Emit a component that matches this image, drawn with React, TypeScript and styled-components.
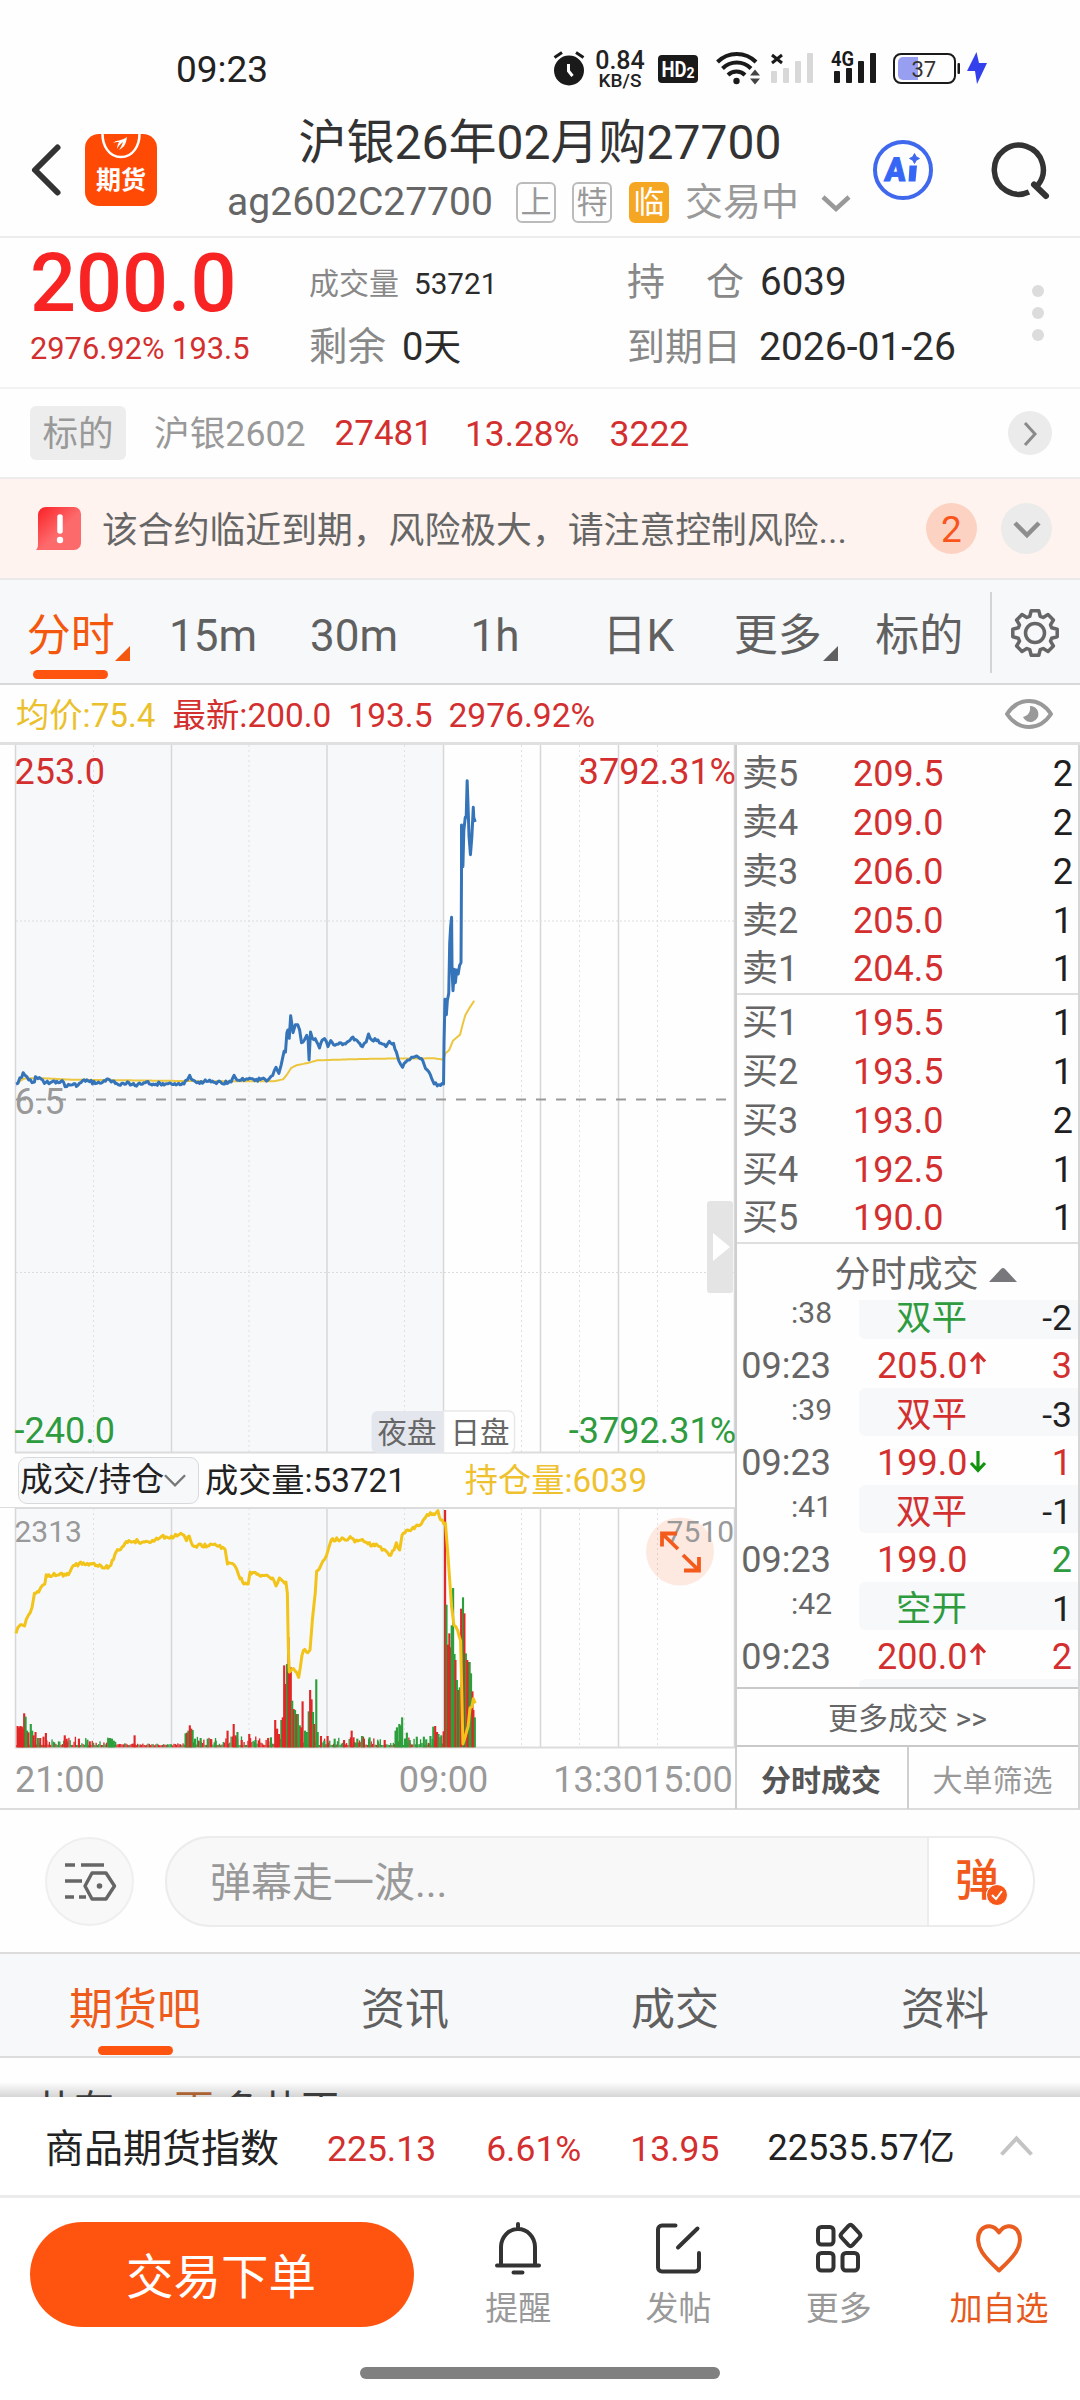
import React from "react";
import styled, { createGlobalStyle, css } from "styled-components";

const RED = "#d32f2f";
const GREEN = "#2e9b3f";
const ORANGE = "#ff540f";
const LINE = "#dcdcdc";

const GlobalStyle = createGlobalStyle`
  *, *::before, *::after { box-sizing: border-box; }
  body {
    margin: 0;
    background: #fefefe;
    color: #222;
    font-family: Roboto, "Noto Sans CJK SC", sans-serif;
  }
  svg { display: block; flex: none; overflow: visible; }
  svg text { font-family: Roboto, "Noto Sans CJK SC", sans-serif; }
`;

const Screen = styled.main`
  width: 1080px;
  height: 2400px;
  display: flex;
  flex-direction: column;
  overflow: hidden;
  white-space: nowrap;
`;

const Text = styled.span<{ $size: number; $color?: string; $weight?: number; $ml?: number; $drop?: number }>`
  font-size: ${(p) => p.$size}px;
  line-height: 1.15;
  color: ${(p) => p.$color ?? "#222"};
  font-weight: ${(p) => p.$weight ?? 400};
  margin-left: ${(p) => p.$ml ?? 0}px;
  padding-top: ${(p) => p.$drop ?? 0}px;
`;

/* ---------- status bar ---------- */

const StatusBar = styled.header`
  height: 100px;
  flex: none;
  display: flex;
  align-items: center;
  padding: 36px 93px 0 176px;
`;

const Clock = styled.span`
  font-size: 37px;
  line-height: 40px;
  margin-top: 4px;
  margin-right: auto;
`;

const StatusIcons = styled.div`
  display: flex;
  align-items: center;
`;

const Speed = styled.div`
  width: 52px;
  margin: 4px 12px 0 9px;
  display: flex;
  flex-direction: column;
  align-items: center;
  font-weight: 500;
  font-size: 25px;
  line-height: 20px;
  small {
    font-size: 19px;
    line-height: 19px;
  }
`;

const StatusGlyph = styled.svg<{ $ml?: number }>`
  margin-left: ${(p) => p.$ml ?? 0}px;
`;

function Status() {
  return (
    <StatusBar>
      <Clock>09:23</Clock>
      <StatusIcons>
        <StatusGlyph width="32" height="34" viewBox="0 0 32 34">
          <circle cx="16" cy="19.5" r="15" fill="#1a1a1a" />
          <path d="M1.5 6.5 9 1.5M30.5 6.5 23 1.5" stroke="#1a1a1a" strokeWidth="3" />
          <path d="M15.5 13v7l4 5" stroke="#fff" strokeWidth="3" fill="none" />
        </StatusGlyph>
        <Speed>
          0.84
          <small>KB/S</small>
        </Speed>
        <StatusGlyph width="40" height="34" viewBox="0 0 40 34">
          <rect y="4" width="40" height="28" rx="4" fill="#1a1a1a" />
          <text x="3.5" y="26" fontSize="22" fontWeight="700" fill="#fff" textLength="25" lengthAdjust="spacingAndGlyphs">HD</text>
          <text x="28.5" y="27" fontSize="14" fontWeight="700" fill="#fff">2</text>
        </StatusGlyph>
        <StatusGlyph $ml={18} width="44" height="34" viewBox="0 0 44 34" fill="none" stroke="#1a1a1a" strokeWidth="4">
          <path d="M1.5 11a27 27 0 0 1 38.500 0" />
          <path d="M6.500 17.500a20 20 0 0 1 28.500 0" />
          <path d="M12 24a12 12 0 0 1 17 0" />
          <circle cx="20.500" cy="30" r="3.200" fill="#1a1a1a" stroke="none" />
          <path d="M34 24.500l5-6 5 6zM34 27.500l5 6 5-6z" fill="#444" stroke="none" />
        </StatusGlyph>
        <StatusGlyph $ml={11} width="43" height="34" viewBox="0 0 43 34" fill="#d8d8d8">
          <path d="M1 4l10 8M11 4l-10 8" stroke="#1a1a1a" strokeWidth="3" />
          <rect y="20" width="6" height="12" rx="1" />
          <rect x="12" y="17" width="6" height="15" rx="1" />
          <rect x="24" y="10" width="6" height="22" rx="1" />
          <rect x="36" y="2" width="6" height="30" rx="1" />
        </StatusGlyph>
        <StatusGlyph $ml={17} width="46" height="34" viewBox="0 0 46 34" fill="#1a1a1a">
          <text x="0" y="15" fontSize="20" fontWeight="700" textLength="23" lengthAdjust="spacingAndGlyphs">4G</text>
          <rect x="3" y="20" width="6" height="12" rx="1" />
          <rect x="15" y="17" width="6" height="15" rx="1" />
          <rect x="27" y="10" width="6" height="22" rx="1" />
          <rect x="39" y="2" width="6" height="30" rx="1" />
        </StatusGlyph>
        <StatusGlyph $ml={16} width="67" height="34" viewBox="0 0 67 34">
          <rect x="1" y="3" width="61" height="29" rx="7" fill="none" stroke="#1a1a1a" strokeWidth="2" />
          <path d="M25 6v23H10a5 5 0 0 1-5-5V11a5 5 0 0 1 5-5z" fill="#989ff0" />
          <text x="18.500" y="25.500" fontSize="22" fill="#333">37</text>
          <rect x="64.500" y="12" width="2.500" height="11" rx="1" fill="#1a1a1a" />
        </StatusGlyph>
        <StatusGlyph $ml={7} width="20" height="34" viewBox="0 0 20 34">
          <path d="M9.500 1 0 20h8l2 13 10-21h-8z" fill="#3340ec" />
        </StatusGlyph>
      </StatusIcons>
    </StatusBar>
  );
}

/* ---------- title bar ---------- */

const TitleBar = styled.div`
  height: 138px;
  flex: none;
  display: grid;
  grid-template-columns: 220px 1fr 220px;
  border-bottom: 2px solid #ececec;
`;

const Side = styled.div<{ $gap: number; $left: number }>`
  display: flex;
  align-items: center;
  gap: ${(p) => p.$gap}px;
  padding: 4px 0 0 ${(p) => p.$left}px;
`;

const Logo = styled.div`
  width: 72px;
  height: 72px;
  border-radius: 14px;
  background: #ff4a06;
  display: flex;
  flex-direction: column;
  align-items: center;
  color: #fff;
  font-weight: 700;
  font-size: 25px;
  line-height: 44px;
`;

const TitleColumn = styled.div`
  display: flex;
  flex-direction: column;
  align-items: center;
  gap: 11px;
  padding-top: 14px;
`;

const Title = styled.h1`
  margin: 0;
  font-size: 48px;
  line-height: 57px;
  font-weight: 400;
  color: #333;
`;

const SubTitle = styled.div`
  display: flex;
  align-items: center;
  height: 41px;
  padding-right: 2px;
`;

const Badge = styled.span<{ $solid?: boolean; $ml: number }>`
  width: 40px;
  height: 41px;
  margin-left: ${(p) => p.$ml}px;
  border-radius: 6px;
  border: 2px solid ${(p) => (p.$solid ? "#f5a623" : "#bbb")};
  background: ${(p) => (p.$solid ? "#f5a623" : "transparent")};
  color: ${(p) => (p.$solid ? "#fff" : "#999")};
  font-size: 31px;
  line-height: 38px;
  text-align: center;
`;

function Header() {
  return (
    <TitleBar>
      <Side $gap={24} $left={31}>
        <svg width="30" height="52" viewBox="0 0 30 52">
          <path d="M26.500 3.500 4 26l22.500 22.500" fill="none" stroke="#333" strokeWidth="6" strokeLinecap="round" strokeLinejoin="round" />
        </svg>
        <Logo>
          <svg width="44" height="25" viewBox="0 0 44 25">
            <path d="M3.500 0c0 11 6 23 18.500 23S40.500 11 40.500 0" fill="none" stroke="#fff" strokeWidth="2.500" />
            <path d="M14 9c3-3 9-2 14-6-1 6-2 10-8 13 2-3 3-5 4-8-3 2-5 5-6 7 0-3 1-5 2-7-3 0-4 0-6 1z" fill="#fff" />
          </svg>
          期货
        </Logo>
      </Side>
      <TitleColumn>
        <Title>沪银26年02月购27700</Title>
        <SubTitle>
          <Text $size={39} $color="#666">ag2602C27700</Text>
          <Badge $ml={23}>上</Badge>
          <Badge $ml={16}>特</Badge>
          <Badge $ml={17} $solid>临</Badge>
          <Text $size={38} $color="#999" $ml={16}>交易中</Text>
          <StatusGlyph $ml={22} width="30" height="16" viewBox="0 0 30 16">
            <path d="M2 2l13 12L28 2" fill="none" stroke="#999" strokeWidth="4.500" />
          </StatusGlyph>
        </SubTitle>
      </TitleColumn>
      <Side $gap={59} $left={13}>
        <svg width="60" height="60" viewBox="0 0 60 60">
          <circle cx="30" cy="30" r="28" fill="none" stroke="#3f68ec" strokeWidth="4" />
          <text x="14.500" y="41" fontSize="33" fontWeight="900" fill="#3566f5" stroke="#3566f5" strokeWidth="1" textLength="21" lengthAdjust="spacingAndGlyphs" transform="skewX(-5)">A</text>
          <path d="M36.500 25.500h7.500L42.500 41.500h-7z" fill="#3566f5" />
          <path d="M41.500 13.500q1 4 5 5-4 1-5 5-1-4-5-5 4-1 5-5z" fill="#3f68ec" stroke="#3f68ec" />
        </svg>
        <svg width="58" height="58" viewBox="0 0 58 58" fill="none" stroke="#333">
          <path d="M37 51A24.500 24.500 0 1 1 45.800 44.200" strokeWidth="5.500" />
          <path d="M42 43.500 54 55" strokeWidth="6" strokeLinecap="round" />
        </svg>
      </Side>
    </TitleBar>
  );
}

/* ---------- quote summary ---------- */

const Quote = styled.section`
  height: 151px;
  flex: none;
  display: grid;
  grid-template-columns: 279px 318px 1fr 85px;
  padding-left: 30px;
  border-bottom: 2px solid #f2f2f2;
`;

const QuoteLead = styled.div`
  padding-top: 1px;
  color: #f82424;
  font-size: 81px;
  font-weight: 500;
  line-height: 90px;
  p {
    margin: 2px 0 0;
    color: ${RED};
    font-size: 30.8px;
    font-weight: 400;
    line-height: 36px;
  }
`;

const QuoteColumn = styled.dl<{ $top: number }>`
  margin: 0;
  padding-top: ${(p) => p.$top}px;
  div {
    display: flex;
    align-items: center;
    height: 46px;
    margin-bottom: ${(p) => 40 - p.$top}px;
  }
`;

const Term = styled.dt<{ $size: number; $width: number }>`
  display: flex;
  justify-content: space-between;
  width: ${(p) => p.$width}px;
  font-size: ${(p) => p.$size}px;
  line-height: 46px;
  color: #888;
`;

const Value = styled.dd<{ $size: number; $ml?: number }>`
  margin: 0 0 0 ${(p) => p.$ml ?? 0}px;
  font-size: ${(p) => p.$size}px;
  line-height: 46px;
  color: #2b2b2b;
`;

const Dots = styled.div`
  display: flex;
  flex-direction: column;
  gap: 10px;
  padding: 47px 0 0 37px;
  i {
    width: 12px;
    height: 12px;
    border-radius: 50%;
    background: #dcdcdc;
  }
`;

function QuotePanel() {
  return (
    <Quote>
      <QuoteLead>
        200.0
        <p>2976.92% 193.5</p>
      </QuoteLead>
      <QuoteColumn $top={23}>
        <div>
          <Term $size={30} $width={105}>成交量</Term>
          <Value $size={29.7}>53721</Value>
        </div>
        <div>
          <Term $size={38.5} $width={93}>剩余</Term>
          <Value $size={38}>0天</Value>
        </div>
      </QuoteColumn>
      <QuoteColumn $top={20.5}>
        <div>
          <Term $size={38} $width={117}><span>持</span><span>仓</span></Term>
          <Value $size={38.5} $ml={16}>6039</Value>
        </div>
        <div>
          <Term $size={38} $width={132}>到期日</Term>
          <Value $size={39}>2026-01-26</Value>
        </div>
      </QuoteColumn>
      <Dots><i /><i /><i /></Dots>
    </Quote>
  );
}

/* ---------- underlying + notice ---------- */

const Underlying = styled.section`
  height: 90px;
  flex: none;
  display: flex;
  align-items: center;
  padding: 0 28px 1px 30px;
  border-bottom: 2px solid #ececec;
`;

const Tag = styled.span`
  width: 96px;
  height: 54px;
  border-radius: 6px;
  background: #ededed;
  color: #999;
  font-size: 35.500px;
  line-height: 56px;
  text-align: center;
`;

const Round = styled.span<{ $size: number; $bg: string; $ml?: number }>`
  width: ${(p) => p.$size}px;
  height: ${(p) => p.$size}px;
  margin-left: ${(p) => p.$ml ?? 0}px;
  border-radius: 50%;
  background: ${(p) => p.$bg};
  color: #fa541c;
  font-size: 37px;
  padding-top: 2px;
  display: flex;
  align-items: center;
  justify-content: center;
`;

const Spacer = styled.span`
  flex: 1;
`;

const Notice = styled.section`
  height: 101px;
  flex: none;
  display: flex;
  align-items: center;
  padding: 0 28px 0 36px;
  background: #fef3ee;
  border-bottom: 2px solid #e9e9ea;
`;

function UnderlyingRow() {
  return (
    <Underlying>
      <Tag>标的</Tag>
      <Text $size={35.7} $color="#999" $ml={28} $drop={4}>沪银2602</Text>
      <Text $size={35} $color={RED} $ml={29} $drop={4}>27481</Text>
      <Text $size={35.3} $color={RED} $ml={32} $drop={4}>13.28%</Text>
      <Text $size={35.5} $color={RED} $ml={30} $drop={4}>3222</Text>
      <Spacer />
      <Round $size={44} $bg="#ebebeb">
        <svg width="14" height="24" viewBox="0 0 14 24">
          <path d="M2 1l10 11L2 23" fill="none" stroke="#8a8a8a" strokeWidth="3" />
        </svg>
      </Round>
    </Underlying>
  );
}

function NoticeRow() {
  return (
    <Notice>
      <svg width="46" height="43" viewBox="0 0 46 43">
        <defs>
          <linearGradient id="alert" x1="0" y1="0" x2="1" y2="1">
            <stop offset="0.100" stopColor="#fa2b2f" />
            <stop offset="0.550" stopColor="#fd6a6c" />
          </linearGradient>
        </defs>
        <path d="M10 0h28a7 7 0 0 1 7 7v29a7 7 0 0 1-7 7H0c2-2 2-4 2-8V8a8 8 0 0 1 8-8z" fill="url(#alert)" />
        <path d="M24 10v14" stroke="#fff" strokeWidth="5.500" strokeLinecap="round" />
        <circle cx="24" cy="33" r="3.200" fill="#fff" />
      </svg>
      <Text $size={35.85} $color="#666" $ml={20} $drop={7}>该合约临近到期，风险极大，请注意控制风险...</Text>
      <Spacer />
      <Round $size={51} $bg="#fcd3c2">2</Round>
      <Round $size={51} $bg="#ebebeb" $ml={24}>
        <svg width="28" height="16" viewBox="0 0 28 16">
          <path d="M2 1l12 12L26 1" fill="none" stroke="#8e8e8e" strokeWidth="4.500" />
        </svg>
      </Round>
    </Notice>
  );
}

/* ---------- period tabs ---------- */

const PeriodBar = styled.nav`
  height: 105px;
  flex: none;
  display: grid;
  grid-template-columns: repeat(7, minmax(0, 1fr)) 90px;
  background: #f7f8fa;
  border-bottom: 2px solid #d9d9d9;
`;

const Period = styled.button<{ $active?: boolean; $corner?: boolean; $shift?: number }>`
  position: relative;
  border: 0;
  padding: 8px 0 0 ${(p) => p.$shift ?? 0}px;
  background: none;
  font: inherit;
  font-size: 44px;
  line-height: 52px;
  color: ${(p) => (p.$active ? "#f4580f" : "#606060")};
  ${(p) =>
    p.$corner &&
    css`
      &::before {
        content: "";
        position: absolute;
        right: 11px;
        bottom: 22px;
        border-left: 15px solid transparent;
        border-bottom: 15px solid currentColor;
      }
    `}
  ${(p) =>
    p.$active &&
    css`
      &::after {
        content: "";
        position: absolute;
        left: 33px;
        bottom: 4px;
        width: 75px;
        height: 9px;
        border-radius: 5px;
        background: ${ORANGE};
      }
    `}
`;

const GearSlot = styled.div`
  width: 90px;
  height: 81px;
  margin-top: 12px;
  padding-right: 2px;
  display: flex;
  align-items: center;
  justify-content: center;
  border-left: 2px solid #d4d4d4;
`;

function gearPath(teeth: number, outer: number, inner: number) {
  const pts: string[] = [];
  for (let i = 0; i < teeth; i++) {
    const a = (i / teeth) * Math.PI * 2 - Math.PI / 2;
    for (const [off, r] of [[-0.3, inner], [-0.17, outer], [0.17, outer], [0.3, inner]]) {
      pts.push(`${(25 + Math.cos(a + off) * r).toFixed(1)} ${(25 + Math.sin(a + off) * r).toFixed(1)}`);
    }
  }
  return `M${pts.join("L")}Z`;
}

function Periods() {
  return (
    <PeriodBar>
      <Period $active $corner>分时</Period>
      <Period $shift={2}>15m</Period>
      <Period $shift={1}>30m</Period>
      <Period>1h</Period>
      <Period $shift={4}>日K</Period>
      <Period $corner>更多</Period>
      <Period>标的</Period>
      <GearSlot>
        <svg width="50" height="50" viewBox="0 0 50 50" fill="none" stroke="#666" strokeWidth="3.500" strokeLinejoin="round">
          <path d={gearPath(8, 22.500, 17.500)} />
          <circle cx="25" cy="25" r="9.500" />
        </svg>
      </GearSlot>
    </PeriodBar>
  );
}

/* ---------- chart info ---------- */

const InfoRow = styled.div`
  height: 60px;
  flex: none;
  display: flex;
  align-items: center;
  padding: 0 27px 0 16px;
  border-bottom: 3px solid #e0e0e0;
`;

function Info() {
  return (
    <InfoRow>
      <Text $size={33.3} $color="#eac12c" $drop={5}>均价:75.4</Text>
      <Text $size={33.4} $color={RED} $ml={17} $drop={5}>最新:200.0</Text>
      <Text $size={33.5} $color={RED} $ml={17} $drop={5}>193.5</Text>
      <Text $size={33.6} $color={RED} $ml={16} $drop={5}>2976.92%</Text>
      <Spacer />
      <svg width="48" height="30" viewBox="0 0 48 30">
        <path d="M2 15C8 6 15 2 24 2s16 4 22 13c-6 9-13 13-22 13S8 24 2 15z" fill="none" stroke="#999" strokeWidth="4" strokeLinejoin="round" />
        <path d="M25 7a8 8 0 1 1-7 11c4-1 8-4 7-11z" fill="#999" />
      </svg>
    </InfoRow>
  );
}

/* ---------- charts ---------- */

const Trading = styled.section`
  height: 1065px;
  flex: none;
  display: grid;
  grid-template-columns: 735px 345px;
  border-bottom: 2px solid ${LINE};
`;

const ChartColumn = styled.div`
  display: flex;
  flex-direction: column;
`;

type Pt = [number, number];

function makeRandom(seed: number) {
  let s = seed;
  return () => {
    s = (s * 16807) % 2147483647;
    return s / 2147483647;
  };
}

/* Fills the gaps between key points with small per-minute ticks. */
function ticks(points: Pt[], amp: number, step = 2.75) {
  const rnd = makeRandom(77);
  const out: string[] = [];
  points.forEach(([x, y], i) => {
    out.push(`${x},${y}`);
    const next = points[i + 1];
    if (!next) return;
    const n = Math.floor((next[0] - x) / step);
    for (let k = 1; k < n; k++) {
      const t = k / n;
      out.push(`${(x + (next[0] - x) * t).toFixed(1)},${(y + (next[1] - y) * t + (rnd() - 0.5) * amp).toFixed(1)}`);
    }
  });
  return out.join(" ");
}

const PRICE: Pt[] = [
  [34, 1062], [38, 1060], [42, 1044], [46, 1042], [49, 1028], [53, 1036], [57, 1040], [61, 1050], [68, 1058], [73, 1056], [75, 1040],
  [80, 1046], [87, 1047], [94, 1060], [110, 1056], [132, 1052], [138, 1070], [145, 1063], [165, 1066], [175, 1052], [190, 1055], [205, 1060],
  [218, 1056], [229, 1047], [236, 1056], [247, 1060], [255, 1066], [273, 1058], [286, 1067], [305, 1058], [325, 1062], [345, 1060], [390, 1062],
  [397, 1050], [402, 1036], [408, 1050], [420, 1056], [450, 1053], [470, 1060], [490, 1056], [496, 1036], [502, 1050], [520, 1048], [540, 1052],
  [555, 1046], [568, 1050], [578, 1036], [585, 1012], [591, 1030], [596, 1004], [602, 964], [605, 966], [608, 908], [610, 900], [613, 925],
  [616, 857], [621, 908], [626, 884], [631, 884], [635, 900], [639, 938], [645, 930], [650, 916], [653, 930], [655, 990], [658, 906], [662, 925],
  [668, 926], [677, 954], [683, 930], [688, 926], [695, 950], [701, 932], [710, 946], [720, 938], [732, 942], [745, 924], [757, 932],
  [768, 950], [776, 936], [781, 912], [788, 930], [801, 930], [810, 942], [818, 950], [825, 934], [834, 940], [840, 966], [845, 992], [853, 1012],
  [860, 996], [868, 990], [876, 982], [883, 978], [890, 986], [896, 992], [902, 1016], [909, 1026], [915, 1046], [920, 1062], [930, 1064], [940, 1062],
  [941, 940], [943, 808], [946, 854], [948, 812], [951, 790], [953, 640], [955, 590], [957, 562], [958, 720], [960, 782], [963, 718], [965, 758],
  [968, 720], [971, 732], [974, 706], [977, 698], [978, 440], [978, 285], [981, 410], [983, 300], [986, 262], [988, 262], [990, 152], [992, 232],
  [994, 320], [997, 374], [1000, 320], [1003, 232], [1004, 262], [1007, 276],
];

const AVERAGE: Pt[] = [
  [36, 1060], [50, 1046], [80, 1044], [150, 1049], [270, 1051], [450, 1054], [580, 1054], [600, 1048], [608, 1034], [617, 1014], [628, 1006],
  [655, 998], [672, 991], [740, 988], [800, 986], [920, 985], [940, 989], [944, 970], [952, 960], [960, 932], [975, 914], [980, 886], [986, 856],
  [994, 836], [1005, 812],
];

const HOLDINGS: Pt[] = [
  [34, 760], [41, 738], [52, 738], [60, 706], [68, 682], [73, 640], [82, 636], [90, 616], [95, 612], [98, 584], [145, 584], [152, 564], [168, 550],
  [205, 556], [220, 564], [235, 556], [246, 516], [262, 498], [273, 482], [315, 486], [340, 472], [375, 468], [383, 460], [390, 466], [395, 482],
  [401, 468], [408, 496], [440, 498], [455, 492], [477, 508], [482, 552], [498, 558], [506, 586], [517, 612], [526, 612], [530, 576], [555, 586],
  [578, 594], [585, 618], [592, 594], [600, 604], [606, 606], [609, 640], [611, 800], [613, 876], [622, 866], [628, 876], [633, 892], [640, 826],
  [646, 808], [652, 818], [657, 810], [662, 720], [668, 640], [671, 574], [677, 566], [684, 544], [692, 526], [697, 502], [702, 480], [745, 474],
  [752, 486], [765, 480], [780, 492], [800, 496], [813, 508], [825, 526], [835, 510], [840, 488], [847, 510], [852, 466], [864, 450], [878, 446],
  [893, 432], [905, 404], [912, 398], [921, 404], [928, 392], [934, 420], [944, 430], [949, 520], [953, 600], [957, 680], [962, 736], [970, 752],
  [976, 782], [978, 900], [981, 1092], [986, 1070], [992, 1040], [996, 984], [1000, 980], [1003, 956], [1007, 970],
];

/* [x, height, colour] of the volume bars that stand out of the background */
const SPIKES: [number, number, "r" | "g"][] = [
  [37, 64, "r"], [40, 60, "r"], [43, 64, "r"], [46, 62, "r"], [48, 56, "r"], [51, 102, "r"], [54, 92, "g"], [57, 50, "g"], [60, 45, "r"], [65, 70, "g"],
  [68, 50, "g"], [71, 36, "r"], [75, 46, "r"], [80, 28, "g"], [85, 28, "r"], [92, 32, "r"], [97, 43, "r"], [137, 36, "r"], [141, 26, "r"], [167, 26, "r"],
  [185, 23, "g"], [190, 18, "r"], [230, 26, "g"], [233, 28, "g"], [237, 26, "g"], [241, 20, "g"], [285, 36, "r"], [393, 42, "g"], [396, 44, "r"],
  [399, 50, "g"], [402, 66, "r"], [405, 56, "r"], [408, 52, "g"], [413, 26, "g"], [425, 28, "g"], [440, 26, "g"], [457, 20, "g"], [482, 50, "r"],
  [495, 70, "r"], [499, 36, "r"], [503, 46, "g"], [512, 22, "r"], [528, 40, "r"], [541, 22, "g"], [568, 28, "r"], [574, 30, "g"], [583, 82, "r"],
  [587, 56, "r"], [591, 40, "r"], [596, 82, "g"], [599, 90, "r"], [602, 246, "r"], [605, 190, "r"], [608, 250, "g"], [611, 330, "r"], [613, 222, "r"],
  [616, 240, "r"], [619, 140, "g"], [622, 115, "r"], [625, 112, "g"], [628, 100, "r"], [631, 100, "g"], [635, 66, "g"], [638, 60, "r"], [641, 138, "r"],
  [646, 50, "g"], [650, 46, "g"], [654, 108, "g"], [657, 172, "r"], [660, 144, "r"], [663, 106, "g"], [666, 70, "r"], [670, 204, "g"], [673, 46, "g"],
  [680, 34, "r"], [687, 20, "g"], [694, 34, "r"], [709, 26, "g"], [729, 22, "r"], [745, 50, "r"], [749, 30, "r"], [757, 26, "g"], [767, 34, "g"],
  [771, 26, "r"], [783, 30, "g"], [801, 18, "g"], [815, 22, "r"], [838, 50, "g"], [841, 60, "g"], [846, 70, "g"], [849, 66, "g"], [852, 90, "g"],
  [858, 26, "g"], [862, 44, "g"], [868, 22, "g"], [883, 32, "g"], [898, 32, "g"], [903, 24, "g"], [912, 34, "g"], [918, 62, "g"], [922, 64, "r"],
  [926, 46, "r"], [929, 40, "g"], [935, 36, "g"], [940, 48, "r"], [943, 712, "r"], [946, 428, "g"], [949, 308, "r"], [952, 342, "r"], [955, 300, "r"],
  [957, 366, "g"], [960, 478, "g"], [963, 280, "g"], [965, 262, "r"], [968, 202, "g"], [971, 172, "r"], [974, 180, "g"], [977, 416, "r"],
  [981, 450, "g"], [984, 402, "r"], [987, 282, "g"], [990, 262, "r"], [993, 256, "r"], [995, 256, "g"], [998, 222, "g"], [1001, 168, "r"],
  [1003, 112, "r"], [1006, 90, "g"],
];

const SOLID = [15.5, 171.5, 327, 443.5, 540.5, 618.5, 734.5];
const DOTTED = [93.5, 249, 404.5, 521.5, 579.5, 657.5];

function Grid({ height }: { height: number }) {
  return (
    <>
      <rect x="15.500" width="428" height={height} fill="#f7f8fa" />
      {DOTTED.map((x) => (
        <path key={x} d={`M${x} 0V${height}`} stroke="#e0e0e0" strokeDasharray="2 3" />
      ))}
      {SOLID.map((x) => (
        <path key={x} d={`M${x} 0V${height}`} stroke="#d6d7d9" strokeWidth="1.500" />
      ))}
      <path d={`M15 ${height - 0.5}H735`} stroke={LINE} strokeWidth="2" />
    </>
  );
}

function PriceChart() {
  return (
    <svg width="735" height="708" viewBox="0 0 735 708">
      <Grid height={708} />
      <path d="M16 176H735M16 527.500H735" stroke="#dcdcdc" strokeDasharray="2 2" />
      <text x="14.500" y="368.500" fontSize="36" fill="#999">6.5</text>
      <path d="M16 354.500H728" stroke="#999" strokeWidth="2" strokeDasharray="10 10" />
      <g transform="translate(0 -15) scale(0.47187 0.33333)" fill="none" strokeLinejoin="round">
        <polyline points={ticks(AVERAGE, 0)} stroke="#ecc63e" strokeWidth="2" vectorEffect="non-scaling-stroke" />
        <polyline points={ticks(PRICE, 10)} stroke="#3574b9" strokeWidth="3" vectorEffect="non-scaling-stroke" />
      </g>
      <text x="14.500" y="39" fontSize="36" fill={RED}>253.0</text>
      <text x="736" y="39" fontSize="36" fill={RED} textAnchor="end">3792.31%</text>
      <text x="14.500" y="698" fontSize="36" fill={GREEN}>-240.0</text>
      <text x="736" y="698" fontSize="36" fill={GREEN} textAnchor="end">-3792.31%</text>
      <path d="M443.500 666h-66a6 6 0 0 0-6 6v30a6 6 0 0 0 6 6h66z" fill="#e3e6ed" />
      <path d="M443.500 666h65a6 6 0 0 1 6 6v30a6 6 0 0 1-6 6h-65z" fill="#fff" stroke="#e8e8e8" strokeWidth="1.500" />
      <text x="407" y="697.500" fontSize="29.500" fill="#666" textAnchor="middle">夜盘</text>
      <text x="480" y="697.500" fontSize="29.500" fill="#666" textAnchor="middle">日盘</text>
      <rect x="707" y="456" width="26" height="92" rx="3" fill="#e4e4e4" />
      <path d="M713 488v28l17-14z" fill="#fff" />
    </svg>
  );
}

function VolumeChart() {
  const rnd = makeRandom(4211);
  const base: React.ReactNode[] = [];
  for (let x = 36; x < 940; x += 2.75) {
    const quiet = x > 245 && x < 390;
    const h = quiet ? 6 + rnd() * 6 : 7 + Math.pow(rnd(), 3) * 26;
    base.push(<rect key={x} x={x - 1.4} y={1102 - h} width="2.800" height={h} fill={rnd() > (quiet ? 0.25 : 0.45) ? "#dc2727" : "#2c9a3c"} />);
  }
  return (
    <svg width="735" height="240" viewBox="0 0 735 240">
      <Grid height={240} />
      <path d="M15 0H735" stroke={LINE} strokeWidth="2" />
      <text x="14.500" y="33.500" fontSize="30" fill="#999">2313</text>
      <g transform="translate(0 -128) scale(0.47187 0.33333)" fill="none" strokeLinejoin="round">
        {base}
        {SPIKES.map(([x, h, c]) => (
          <rect key={x} x={x - 2} y={1102 - h} width="4.500" height={h} fill={c === "r" ? "#e02626" : "#2b9f3b"} />
        ))}
        <polyline points={ticks(HOLDINGS, 11)} stroke="#f2c318" strokeWidth="3" vectorEffect="non-scaling-stroke" />
      </g>
      <circle cx="680" cy="43.500" r="34" fill="#ff6a33" fillOpacity="0.140" />
      <text x="734" y="33.500" fontSize="30" fill="#999" textAnchor="end">7510</text>
      <path d="M678 41 662 25.500M662 38.500V25.500h15M683 47l16 15.500M699 49v13.500h-15" fill="none" stroke="#f45a1c" strokeWidth="3.800" />
    </svg>
  );
}

const LegendRow = styled.div`
  height: 55px;
  display: flex;
  align-items: center;
  padding-left: 18px;
  border-bottom: 1px solid ${LINE};
`;

const Picker = styled.button`
  width: 181px;
  height: 47px;
  padding: 0 0 0 1px;
  display: flex;
  align-items: center;
  border: 1.500px solid #d8d9db;
  border-radius: 9px;
  background: #f7f8fa;
  font: inherit;
`;

const AxisRow = styled.div`
  height: 61px;
  display: flex;
  align-items: center;
  padding: 2px 4px 0 15px;
`;

const TimeLabel = styled.span<{ $ml?: number }>`
  margin-left: ${(p) => p.$ml ?? 0}px;
  color: #999;
  font-size: 36px;
  line-height: 42px;
`;

/* ---------- order book ---------- */

const BookColumn = styled.div`
  display: flex;
  flex-direction: column;
  border-left: 2px solid #cfcfcf;
  border-right: 2px solid #d6d6d6;
`;

const Levels = styled.div<{ $top: number; $height: number }>`
  height: ${(p) => p.$height}px;
  padding-top: ${(p) => p.$top}px;
  border-bottom: 2px solid #dedede;
`;

const Level = styled.div`
  display: grid;
  grid-template-columns: 109px 1fr auto;
  align-items: center;
  height: 48.750px;
  padding: 0 5px 0 5px;
  font-size: 36px;
  line-height: 48px;
  span:nth-child(1) { color: #666; }
  span:nth-child(2) { color: ${RED}; padding-left: 2px; }
  span:nth-child(3) { color: #1f1f1f; }
`;

const TradesTitle = styled.div`
  height: 56px;
  display: flex;
  align-items: center;
  justify-content: center;
  gap: 10px;
  padding: 5px 0 0 36px;
`;

const TradeList = styled.div`
  height: 389px;
  overflow: hidden;
  border-bottom: 2px solid #c9c9c9;
`;

const TradePair = styled.div<{ $first?: boolean }>`
  display: grid;
  grid-template-columns: 123px 220px;
  grid-template-rows: 48px 49px;
  align-items: center;
  margin-left: -1px;
  margin-top: ${(p) => (p.$first ? -9 : 0)}px;
`;

const Second = styled.span`
  justify-self: end;
  padding: 0 27px 5px 0;
  font-size: 30px;
  line-height: 40px;
  color: #666;
`;

const Stamp = styled.span`
  justify-self: end;
  padding: 5px 28px 0 0;
  font-size: 36px;
  line-height: 44px;
  color: #666;
`;

const Kind = styled.div<{ $color: string }>`
  height: 48px;
  display: flex;
  align-items: center;
  justify-content: space-between;
  padding: 6px 7px 0 37px;
  border-radius: 6px 0 0 6px;
  background: #f7f8fa;
  color: ${(p) => p.$color};
  font-size: 35.500px;
  line-height: 42px;
  b { font-weight: 400; color: #222; }
`;

const Deal = styled.div<{ $color: string }>`
  display: flex;
  align-items: center;
  padding: 5px 7px 0 18px;
  color: ${RED};
  font-size: 36px;
  line-height: 44px;
  b { margin-left: auto; font-weight: 400; color: ${(p) => p.$color}; }
`;

const MoreTrades = styled.div`
  height: 58px;
  padding-top: 3px;
  display: flex;
  align-items: center;
  justify-content: center;
  font-size: 30px;
  line-height: 36px;
  color: #666;
  border-bottom: 2px solid #c9c9c9;
`;

const BookTabs = styled.div`
  flex: 1;
  display: grid;
  grid-template-columns: 170px 1fr;
`;

const BookTab = styled.button<{ $active?: boolean }>`
  border: 0;
  border-left: ${(p) => (p.$active ? "0" : "2px solid #cfcfcf")};
  padding: 5px 2px 0 0;
  background: none;
  font: inherit;
  font-size: 30px;
  line-height: 36px;
  font-weight: ${(p) => (p.$active ? 700 : 400)};
  color: ${(p) => (p.$active ? "#555" : "#999")};
`;

const ASKS = [["卖5", "209.5", "2"], ["卖4", "209.0", "2"], ["卖3", "206.0", "2"], ["卖2", "205.0", "1"], ["卖1", "204.5", "1"]];
const BIDS = [["买1", "195.5", "1"], ["买2", "193.5", "1"], ["买3", "193.0", "2"], ["买4", "192.5", "1"], ["买5", "190.0", "1"]];

const TRADES = [
  { sec: ":38", kind: "双平", kindColor: GREEN, delta: "-2", price: "205.0", move: "up", lots: "3", lotsColor: RED },
  { sec: ":39", kind: "双平", kindColor: RED, delta: "-3", price: "199.0", move: "down", lots: "1", lotsColor: RED },
  { sec: ":41", kind: "双平", kindColor: RED, delta: "-1", price: "199.0", move: "", lots: "2", lotsColor: GREEN },
  { sec: ":42", kind: "空开", kindColor: GREEN, delta: "1", price: "200.0", move: "up", lots: "2", lotsColor: RED },
];

function Arrow({ down }: { down: boolean }) {
  return (
    <svg width="20" height="34" viewBox="0 0 20 34" fill="none" stroke={down ? "#12930f" : RED} strokeWidth="3.200">
      <path d={down ? "M11 5v19M4 17l7 7.500 7-7.500" : "M11 25V5.500M4 12.500l7-7.500 7 7.500"} />
    </svg>
  );
}

function OrderBook() {
  return (
    <BookColumn>
      <Levels $top={5} $height={250}>
        {ASKS.map((r) => (
          <Level key={r[0]}>{r.map((c, i) => <span key={i}>{c}</span>)}</Level>
        ))}
      </Levels>
      <Levels $top={4} $height={249}>
        {BIDS.map((r) => (
          <Level key={r[0]}>{r.map((c, i) => <span key={i}>{c}</span>)}</Level>
        ))}
      </Levels>
      <TradesTitle>
        <Text $size={36} $color="#666" $drop={2}>分时成交</Text>
        <svg width="28" height="14" viewBox="0 0 28 14">
          <path d="M0 14 12 1q2-2 4 0l12 13z" fill="#77777c" />
        </svg>
      </TradesTitle>
      <TradeList>
        {TRADES.map((t, i) => (
          <TradePair key={t.sec} $first={i === 0}>
            <Second>{t.sec}</Second>
            <Kind $color={t.kindColor}>{t.kind}<b>{t.delta}</b></Kind>
            <Stamp>09:23</Stamp>
            <Deal $color={t.lotsColor}>
              {t.price}
              {t.move && <Arrow down={t.move === "down"} />}
              <b>{t.lots}</b>
            </Deal>
          </TradePair>
        ))}
        <TradePair><span /><Kind $color={RED} /></TradePair>
      </TradeList>
      <MoreTrades>更多成交 &gt;&gt;</MoreTrades>
      <BookTabs>
        <BookTab $active>分时成交</BookTab>
        <BookTab>大单筛选</BookTab>
      </BookTabs>
    </BookColumn>
  );
}

function TradingPanel() {
  return (
    <Trading>
      <ChartColumn>
        <PriceChart />
        <LegendRow>
          <Picker>
            <Text $size={32.7} $drop={1}>成交/持仓</Text>
            <svg width="22" height="13" viewBox="0 0 23 13">
              <path d="M1 1l10.500 10.500L22 1" fill="none" stroke="#777" strokeWidth="2.500" />
            </svg>
          </Picker>
          <Text $size={33.2} $ml={6} $drop={2}>成交量:53721</Text>
          <Text $size={33.2} $color="#efc12e" $ml={59} $drop={2}>持仓量:6039</Text>
        </LegendRow>
        <VolumeChart />
        <AxisRow>
          <TimeLabel>21:00</TimeLabel>
          <TimeLabel $ml={294}>09:00</TimeLabel>
          <TimeLabel $ml={65}>13:30</TimeLabel>
          <TimeLabel>15:00</TimeLabel>
        </AxisRow>
      </ChartColumn>
      <OrderBook />
    </Trading>
  );
}

/* ---------- comment bar ---------- */

const CommentBar = styled.section`
  height: 144px;
  flex: none;
  display: flex;
  align-items: center;
  gap: 31px;
  padding: 0 45px;
  border-bottom: 2px solid ${LINE};
`;

const FilterButton = styled.button`
  width: 89px;
  height: 89px;
  padding: 0 0 0 3px;
  border: 2px solid #efefef;
  border-radius: 50%;
  background: #f8f8f8;
  display: flex;
  align-items: center;
  justify-content: center;
`;

const CommentField = styled.div`
  flex: 1;
  height: 91px;
  display: flex;
  border: 2px solid #ececec;
  border-radius: 46px;
  background: #f8f8f8;
  overflow: hidden;
  color: #999;
  font-size: 41px;
  line-height: 90px;
  padding-left: 43px;
`;

const Toggle = styled.div`
  margin-left: auto;
  width: 106px;
  display: flex;
  align-items: center;
  padding-left: 26px;
  background: #fff;
  border-left: 2px solid #ececec;
  color: #f25a1c;
  font-size: 44px;
  font-weight: 500;
  line-height: 88px;
  svg { margin: 28px 0 0 -13px; }
`;

function Comments() {
  return (
    <CommentBar>
      <FilterButton>
        <svg width="52" height="40" viewBox="0 0 52 40" fill="none" stroke="#666" strokeWidth="3.400">
          <path d="M0 4h10M16 4h23M0 20h17M0 36h9M14 36h7" />
          <path d="M27 12h14l8.500 13L41 38H27l-7-13z" strokeLinejoin="round" />
          <circle cx="34.500" cy="25" r="2.800" fill="#666" stroke="none" />
        </svg>
      </FilterButton>
      <CommentField>
        弹幕走一波...
        <Toggle>
          弹
          <svg width="22" height="22" viewBox="0 0 22 22">
            <circle cx="11" cy="11" r="10.500" fill="#f7581a" stroke="#fff" />
            <path d="M6 11l4 4 6-8" fill="none" stroke="#fff" strokeWidth="2" />
          </svg>
        </Toggle>
      </CommentField>
    </CommentBar>
  );
}

/* ---------- section tabs ---------- */

const SectionTabs = styled.nav`
  height: 104px;
  flex: none;
  display: grid;
  grid-template-columns: repeat(4, 1fr);
  background: #f7f8fa;
  border-bottom: 2px solid ${LINE};
`;

const SectionTab = styled.button<{ $active?: boolean }>`
  position: relative;
  border: 0;
  padding: 9px 0 0;
  background: none;
  font: inherit;
  font-size: 44px;
  line-height: 52px;
  color: ${(p) => (p.$active ? "#ee5c1c" : "#606060")};
  ${(p) =>
    p.$active &&
    css`
      &::after {
        content: "";
        position: absolute;
        left: 98px;
        bottom: 1px;
        width: 75px;
        height: 9px;
        border-radius: 5px;
        background: ${ORANGE};
      }
    `}
`;

const Feed = styled.div`
  position: relative;
  height: 39px;
  flex: none;
  overflow: hidden;
  padding: 30px 0 0 34px;
  font-size: 40px;
  line-height: 46px;
  color: #444;
  em { font-style: normal; color: #c4703a; margin-left: 20px; margin-right: 6px; }
  &::after {
    content: "";
    position: absolute;
    inset: 24px 0 0;
    background: linear-gradient(rgba(0, 0, 0, 0), rgba(0, 0, 0, 0.160));
  }
`;

/* ---------- bottom ---------- */

const IndexBar = styled.section`
  height: 101px;
  flex: none;
  display: flex;
  align-items: center;
  padding: 0 47px 0 45px;
  background: #fff;
  border-bottom: 3px solid #ebebeb;
`;

const ActionBar = styled.footer`
  flex: 1;
  display: flex;
  flex-direction: column;
  align-items: center;
  background: #fff;
`;

const Actions = styled.div`
  width: 100%;
  height: 169px;
  display: flex;
  padding: 24px 0 0 30px;
`;

const OrderButton = styled.button`
  width: 384px;
  height: 105px;
  border: 0;
  border-radius: 53px;
  background: ${ORANGE};
  color: #fff;
  font: inherit;
  font-size: 47.500px;
  line-height: 56px;
  padding: 7px 2px 0 0;
  margin-right: 24px;
`;

const Action = styled.div<{ $color?: string }>`
  width: 160.300px;
  display: flex;
  flex-direction: column;
  align-items: center;
  gap: 17px;
  font-size: 33px;
  line-height: 36px;
  color: ${(p) => p.$color ?? "#999"};
`;

const HomeIndicator = styled.div`
  width: 360px;
  height: 12px;
  border-radius: 6px;
  background: #808080;
`;

function Bottom() {
  const stroke = { fill: "none", stroke: "#333", strokeWidth: 4, strokeLinecap: "round", strokeLinejoin: "round" } as const;
  return (
    <ActionBar>
      <Actions>
        <OrderButton>交易下单</OrderButton>
        <Action>
          <svg width="50" height="52" viewBox="0 0 50 52" {...stroke}>
            <path d="M25 2v4M8 42V25a17 18 0 0 1 34 0v17M4 43.500h42M20.500 50.500h9" />
          </svg>
          提醒
        </Action>
        <Action>
          <svg width="50" height="52" viewBox="0 0 50 52" {...stroke}>
            <path d="M22.500 3.500H9a4 4 0 0 0-4 4v38a4 4 0 0 0 4 4h33a4 4 0 0 0 4-4V31M44.500 6.500 25 25.500" />
          </svg>
          发帖
        </Action>
        <Action>
          <svg width="50" height="52" viewBox="0 0 50 52" {...stroke}>
            <rect x="4" y="5" width="15.500" height="17.500" rx="3.500" />
            <rect x="4" y="31" width="15.500" height="17.500" rx="3.500" />
            <rect x="28.500" y="31" width="15.500" height="17.500" rx="3.500" />
            <path d="M34.500 3.800q2-2 4 0l7 7.700q1.800 2 0 4l-7 7.700q-2 2-4 0l-7-7.700q-1.800-2 0-4z" />
          </svg>
          更多
        </Action>
        <Action $color="#e65a1d">
          <svg width="50" height="52" viewBox="0 0 50 52" {...stroke} stroke="#ea5d20">
            <path d="M25 10.500C20 2.500 11.500 2.500 7 8 2.500 14 3.500 23 8 30c4.500 7 10 12 17 18.500C32 42 37.500 37 42 30c4.500-7 5.500-16 1-22-4.500-5.500-13-5.500-18 2.500z" />
          </svg>
          加自选
        </Action>
      </Actions>
      <HomeIndicator />
    </ActionBar>
  );
}

export default function App() {
  return (
    <Screen>
      <GlobalStyle />
      <Status />
      <Header />
      <QuotePanel />
      <UnderlyingRow />
      <NoticeRow />
      <Periods />
      <Info />
      <TradingPanel />
      <Comments />
      <SectionTabs>
        <SectionTab $active>期货吧</SectionTab>
        <SectionTab>资讯</SectionTab>
        <SectionTab>成交</SectionTab>
        <SectionTab>资料</SectionTab>
      </SectionTabs>
      <Feed>共有：<em>更</em>多共正</Feed>
      <IndexBar>
        <Text $size={39} $drop={6}>商品期货指数</Text>
        <Text $size={35.5} $color={RED} $ml={48} $drop={6}>225.13</Text>
        <Text $size={35.5} $color={RED} $ml={50} $drop={6}>6.61%</Text>
        <Text $size={35.5} $color={RED} $ml={49} $drop={6}>13.95</Text>
        <Text $size={36} $ml={48} $drop={6}>22535.57亿</Text>
        <Spacer />
        <svg width="33" height="20" viewBox="0 0 33 20">
          <path d="M1.500 18.500l15-16 15 16" fill="none" stroke="#c4c4c4" strokeWidth="4" />
        </svg>
      </IndexBar>
      <Bottom />
    </Screen>
  );
}
